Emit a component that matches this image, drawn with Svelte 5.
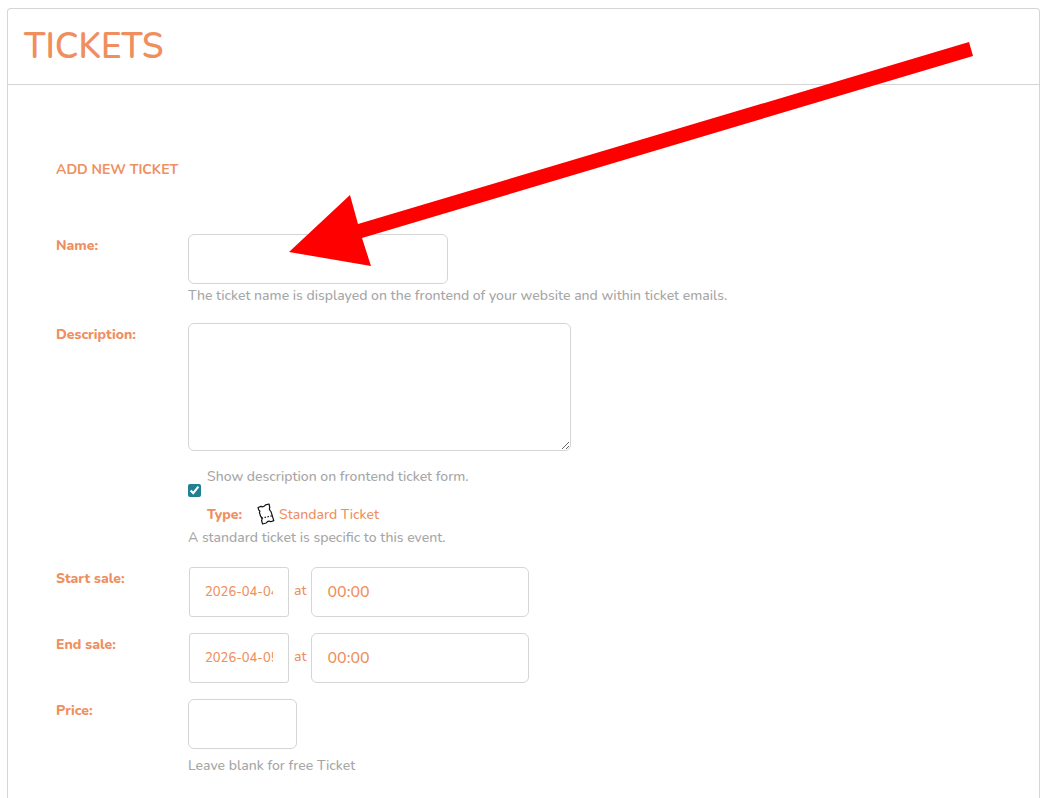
<script>
  let name = $state('');
  let description = $state('');
  let showDescription = $state(true);
  let price = $state('');

  let sales = $state([
    { id: 'start', label: 'Start sale:', date: '2026-04-04', time: '00:00' },
    { id: 'end', label: 'End sale:', date: '2026-04-05', time: '00:00' }
  ]);
</script>

<section class="panel">
  <header class="panel-head">
    <h1>TICKETS</h1>
  </header>

  <form class="panel-body">
    <h2>ADD NEW TICKET</h2>

    <div class="rows">
      <div class="row">
        <label class="lbl" for="ticket-name">Name:</label>
        <div class="field">
          <input class="box name" id="ticket-name" type="text" bind:value={name} />
          <p class="hint">The ticket name is displayed on the frontend of your website and within ticket emails.</p>
        </div>
      </div>

      <div class="row">
        <label class="lbl" for="ticket-desc">Description:</label>
        <div class="field">
          <textarea class="box desc" id="ticket-desc" bind:value={description}></textarea>
          <div class="options">
            <input class="check" id="show-desc" type="checkbox" bind:checked={showDescription} />
            <div class="option-lines">
              <label class="muted" for="show-desc">Show description on frontend ticket form.</label>
              <div class="type">
                <span class="lbl">Type:</span>
                <span class="kind">
                  <svg class="ticket" viewBox="0 0 20 22" width="20" height="22" aria-hidden="true">
                    <path d="M2 4.5 L5 3.4 Q7.6 4.6 9.6 1.9 L13 1 L13.8 4.4 Q12.6 6.6 15 8.6 L17.8 17.6 L14.8 18.7 Q12.2 17 10.2 20 L6.6 21 L5.6 17.6 Q6.8 15.2 4.6 13.2 L3.4 9.4 Q4.6 7.8 2.8 7.2 Z" fill="#fff" stroke="#111" stroke-width="1.2" stroke-linejoin="round" />
                    <path d="M5.6 15.2 L16 12.8" fill="none" stroke="#111" stroke-width="1.2" stroke-dasharray="1.5 1.5" />
                  </svg>
                  Standard Ticket
                </span>
              </div>
            </div>
          </div>
          <p class="hint kind-hint">A standard ticket is specific to this event.</p>
        </div>
      </div>

      {#each sales as s (s.id)}
        <div class="row">
          <label class="lbl" for="{s.id}-date">{s.label}</label>
          <div class="field when">
            <input class="box date" id="{s.id}-date" type="text" bind:value={s.date} />
            <label class="at" for="{s.id}-time">at</label>
            <input class="box time" id="{s.id}-time" type="text" bind:value={s.time} />
          </div>
        </div>
      {/each}

      <div class="row">
        <label class="lbl" for="ticket-price">Price:</label>
        <div class="field">
          <input class="box price" id="ticket-price" type="text" bind:value={price} />
          <p class="hint price-hint">Leave blank for free Ticket</p>
        </div>
      </div>
    </div>
  </form>

  <!-- pointer laid over the form, aimed at the name box -->
  <svg class="arrow" viewBox="0 0 684 224" width="684" height="224" aria-hidden="true">
    <polygon points="0,210 61,153 69,182 680,0 684,14 73,196 82,224" fill="#f00" />
  </svg>
</section>

<style>
  :global(body) { background: #fff; }

  .panel {
    position: relative;
    box-sizing: border-box;
    min-height: calc(100vh - 8px);
    margin: 8px 18px 0 7px;
    border: 1px solid #d5d5d5;
    border-bottom: 0;
    border-radius: 4px 4px 0 0;
    color: #ef8f60;
    font: 500 14px/23px Nunito, "Noto Sans", sans-serif;
  }

  .panel-head { padding: 14px 16px 13px; border-bottom: 1px solid #d5d5d5; }
  h1 { margin: 0; font-size: 35px; font-weight: 600; line-height: 48px; }

  .panel-body { padding: 73px 48px 24px; }
  h2 { margin: 0 0 53px; font-size: 14px; font-weight: 700; line-height: 23px; }

  .rows { display: flex; flex-direction: column; gap: 16px; }
  .row { display: grid; grid-template-columns: 132px minmax(0, 1fr); }
  .lbl { font-weight: 800; }

  .box {
    display: block;
    box-sizing: border-box;
    height: 50px;
    max-width: 100%;
    margin: 0;
    padding: 0 15px;
    border: 1px solid #d5d5d5;
    border-radius: 6px;
    background: #fff;
    color: inherit;
    font: inherit;
    font-size: 16px;
  }
  .name { width: 260px; }
  .desc { width: 383px; height: 128px; padding: 12px 15px; }
  .date { width: 100px; border-radius: 3px; font-size: 13px; }
  .time { width: 218px; }
  .price { width: 109px; }

  .hint { margin: 0; color: #a6a6a6; }
  .muted { color: #a6a6a6; }
  .kind-hint { margin-bottom: 2px; }
  .price-hint { margin-top: 5px; }

  .options { display: flex; gap: 6px; margin-top: 14px; }
  .check { flex: none; width: 13px; height: 13px; margin: 19px 0 0; accent-color: #217f93; }
  .option-lines { display: flex; flex-direction: column; gap: 15px; }
  .type { display: flex; gap: 14px; }
  .kind { display: flex; gap: 3px; }

  .when { display: flex; align-items: center; gap: 5px; padding-left: 1px; }
  .at { padding-bottom: 3px; }

  .arrow { position: absolute; top: 33px; left: 281px; pointer-events: none; }
</style>
